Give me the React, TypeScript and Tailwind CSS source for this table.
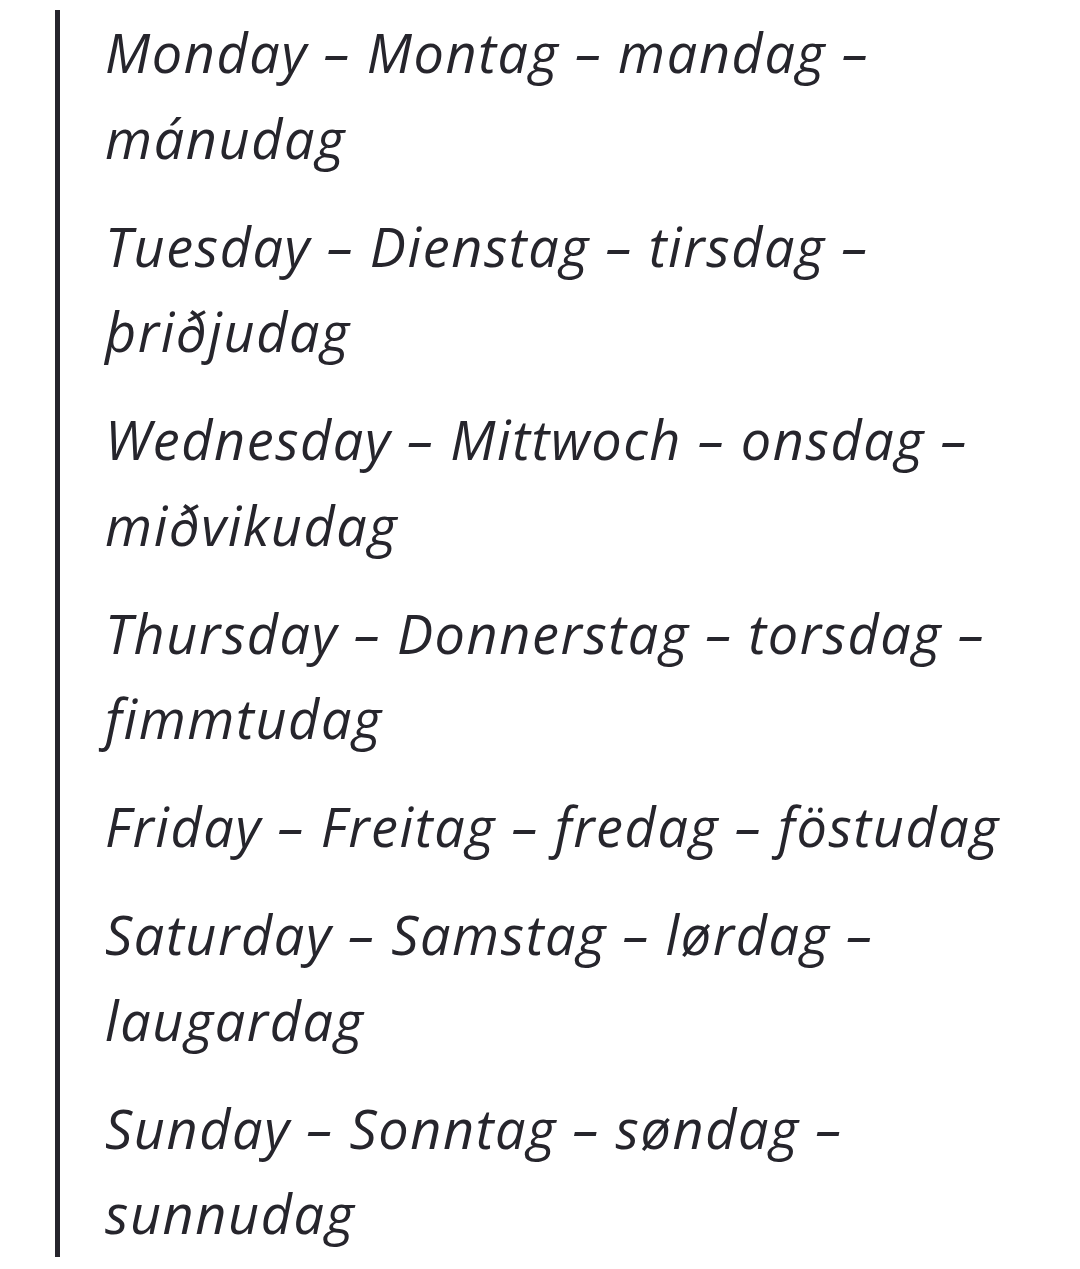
const days: string[][] = [
  ["Monday – Montag – mandag –", "mánudag"],
  ["Tuesday – Dienstag – tirsdag –", "þriðjudag"],
  ["Wednesday – Mittwoch – onsdag –", "miðvikudag"],
  ["Thursday – Donnerstag – torsdag –", "fimmtudag"],
  ["Friday – Freitag – fredag – föstudag"],
  ["Saturday – Samstag – lørdag –", "laugardag"],
  ["Sunday – Sonntag – søndag –", "sunnudag"],
];

export default function App() {
  return (
    <div className="w-[1080px] h-[1269px] bg-white pt-[10px]">
      <blockquote
        className="ml-[55px] border-l-[5px] border-[#26252c] pl-[45px] flex flex-col gap-[22.5px] italic text-[#26252c] text-[54px] leading-[85.5px] tracking-[1.6px]"
        style={{ fontFamily: '"Open Sans", "DejaVu Sans", sans-serif' }}
      >
        {days.map((lines) => (
          <p key={lines[0]} className="whitespace-nowrap">
            {lines.map((l) => (
              <span key={l} className="block">
                {l}
              </span>
            ))}
          </p>
        ))}
      </blockquote>
    </div>
  );
}
